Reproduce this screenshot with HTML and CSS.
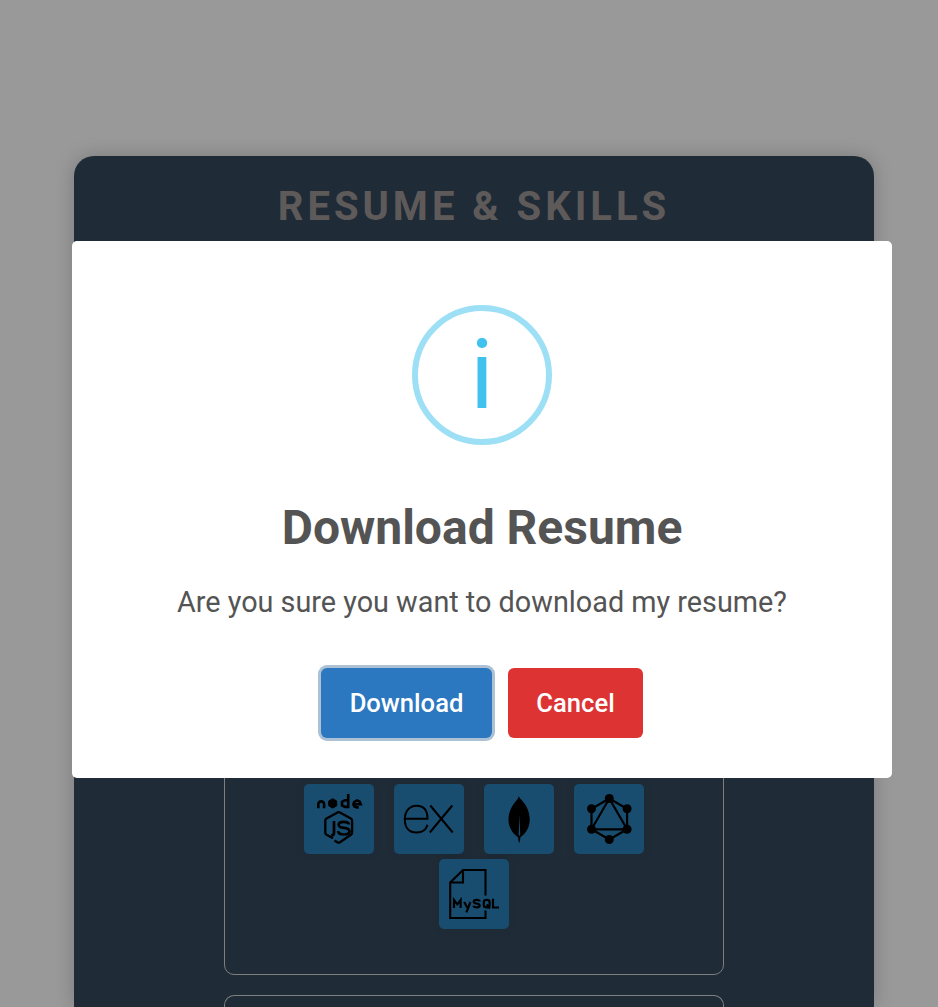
FILE: index.html
```html
<!DOCTYPE html>
<html lang="en">
<head>
<meta charset="utf-8">
<title>Resume &amp; Skills</title>
<link rel="stylesheet" href="styles.css">
</head>
<body>
<main class="card">
  <h1 class="card-title">RESUME &amp; SKILLS</h1>
  <section class="panel panel-main">
    <div class="skills">
      <div class="skill">
        <svg viewBox="0 0 70 70" fill="none" stroke="#000" stroke-width="2.600">
          <path d="M14.300 24.300v-4a2.900 2.900 0 0 1 5.800 0v4"/>
          <path d="M28.700 14.700l4 2.300v4.800l-4 2.300-4-2.300V17z" fill="#000" stroke-width="1"/>
          <path d="M44.200 10v12.900h-3.200l-3-1.500v-3.600l3-1.600h3.200"/>
          <path d="M50.500 20.200h6.200l-1-2.600-2.500-1.200-3 1.500-.8 2.300.8 2 2.500 1.200h2"/>
          <path d="M29 54.300l-6.500-3.600q-1.200-.7-1.200-2V36.500q0-1.300 1.200-2L33.500 28.400q1.200-.6 2.400 0l11 6.100q1.200.7 1.200 2v12.200q0 1.300-1.200 2L36 58.300q-1.300.8-2.600 0l-3-1.700" stroke-width="2.300"/>
          <path d="M30 37v12q0 2.300-2.800 2.500M45 40.500q-.3-2.700-5.300-2.700-5 0-5 2.900 0 2.700 5.200 3.200 5.600.5 5.600 3.400 0 3.200-5.600 3.200-5.500 0-5.800-3.300" stroke-width="2.700"/>
        </svg>
      </div>
      <div class="skill">
        <svg viewBox="0 0 70 70" fill="none" stroke="#000" stroke-width="2">
          <path d="M11 34.800h22.500C33.500 26 29.500 21.700 22.600 21.700 15 21.700 10.800 27.500 10.800 35.500c0 8 4.300 13 11.800 13 5.800 0 9.600-3 10.900-7.800M36.300 21.500l22.400 27M58.300 21.500L35.800 48.500"/>
        </svg>
      </div>
      <div class="skill">
        <svg viewBox="0 0 70 70">
          <path d="M34.700 12c.7 2 2 3 3.500 4.700 5 5.500 7.500 12 7.500 18.500 0 7.800-3.300 13.700-9.200 17.800l-.8 5.500h-.9l-.8-5.200C28 48.800 24.500 43 24.500 35.500c0-7 3.300-14 7.700-18.800C33.500 15.300 34.500 14 34.700 12z"/>
          <path d="M35.400 30.500l.8 20-.8 1.500-.7-1.500z" fill="#2980b9"/>
        </svg>
      </div>
      <div class="skill">
        <svg viewBox="0 0 70 70">
          <path d="M35.300 14.500l17.800 10.300v20.500L35.300 55.500 17.500 45.300V24.800zM35.300 14.500L17.500 45.300h35.600z" fill="none" stroke="#000" stroke-width="2.200"/>
          <circle cx="35.300" cy="14.500" r="4.500"/><circle cx="53.100" cy="24.800" r="4.500"/>
          <circle cx="53.100" cy="45.300" r="4.500"/><circle cx="35.300" cy="55.500" r="4.500"/>
          <circle cx="17.500" cy="45.300" r="4.500"/><circle cx="17.500" cy="24.800" r="4.500"/>
        </svg>
      </div>
      <div class="skill">
        <svg viewBox="0 0 70 70" fill="none" stroke="#000" stroke-width="2.100">
          <path d="M46.500 36.500V11H24L11.200 23.500V59h35.300v-7.500M24 11v12.500H11.200"/>
          <g stroke-width="2.200">
            <path d="M15 49v-8l3.300 4.300 3.300-4.300V49M25.200 43l3 5.500M31.400 43l-4 10.300"/>
            <path d="M40.800 42.500q-.3-1.700-3.200-1.700t-2.900 1.800q0 1.600 3 2t3 1.900q0 1.900-3 1.900t-3.100-1.700"/>
            <path d="M44.800 43q0-2.200 2.900-2.200t2.900 2.200v3.200q0 2.200-2.900 2.200t-2.900-2.200zM47.700 45.500l3.300 4M54 39.700v8.800h6"/>
          </g>
        </svg>
      </div>
    </div>
  </section>
  <section class="panel panel-next"></section>
</main>
<div class="backdrop">
  <div class="modal" role="dialog" aria-modal="true">
    <div class="modal-icon">i</div>
    <h2 class="modal-title">Download Resume</h2>
    <p class="modal-text">Are you sure you want to download my resume?</p>
    <div class="actions">
      <button class="btn confirm">Download</button>
      <button class="btn cancel">Cancel</button>
    </div>
  </div>
</div>
</body>
</html>
```
FILE: styles.css
```css
* { box-sizing: border-box; }
body {
  margin: 0;
  background: #fff;
  font-family: Roboto, sans-serif;
  padding: 156px 0 0 74px;
}
.card {
  width: 800px;
  height: 851px;
  padding-top: 21px;
  border-radius: 20px 20px 0 0;
  background: #34495c;
  box-shadow: 0 0 20px rgba(0, 0, 0, .2);
  display: flex;
  flex-direction: column;
  align-items: center;
}
.card-title {
  margin: 0 0 19px;
  height: 60px;
  line-height: 60px;
  font-size: 40px;
  font-weight: 700;
  letter-spacing: 4px;
  color: #9f9696;
}
.panel {
  width: 500px;
  flex: none;
  border: 1px solid #d3d3d3;
  border-radius: 10px;
}
.panel-main {
  height: 719px;
  margin-bottom: 20px;
  padding: 0 45px 45px;
  display: flex;
  align-items: flex-end;
}
.panel-next {
  height: 12px;
  border-bottom: 0;
  border-radius: 10px 10px 0 0;
}
.skills {
  width: 100%;
  display: flex;
  flex-wrap: wrap;
  justify-content: center;
  gap: 5px 20px;
}
.skill {
  width: 70px;
  height: 70px;
  border-radius: 5px;
  background: #2980b9;
  box-shadow: 0 0 10px rgba(0, 0, 0, .1);
}
.skill svg { display: block; width: 70px; height: 70px; }
.backdrop {
  position: fixed;
  inset: 0;
  padding: 241px 46px 0 72px;
  background: rgba(0, 0, 0, .4);
}
.modal {
  width: 820px;
  height: 537px;
  padding-top: 64px;
  border-radius: 5px;
  background: #fff;
  color: #545454;
  font-size: 25.6px;
  display: flex;
  flex-direction: column;
  align-items: center;
}
.modal-icon {
  width: 140px;
  height: 140px;
  border: 6px solid #9de0f6;
  border-radius: 50%;
  color: #3fc3ee;
  font-size: 96px;
  line-height: 128px;
  text-align: center;
}
.modal-title {
  margin: 55px 0 0;
  font-size: 48px;
  font-weight: 700;
  line-height: 56px;
}
.modal-text {
  margin: 29px 0 0;
  font-size: 28.8px;
  line-height: 34px;
}
.actions {
  display: flex;
  gap: 16px;
  margin-top: 49px;
}
.btn {
  height: 70px;
  padding: 0;
  border: 0;
  border-radius: 6px;
  color: #fff;
  font: 500 25.6px Roboto, sans-serif;
}
.confirm {
  width: 171px;
  background: #2b77c0;
  box-shadow: 0 0 0 3px rgba(50, 100, 150, .4);
}
.cancel { width: 135px; background: #dd3333; }
```
